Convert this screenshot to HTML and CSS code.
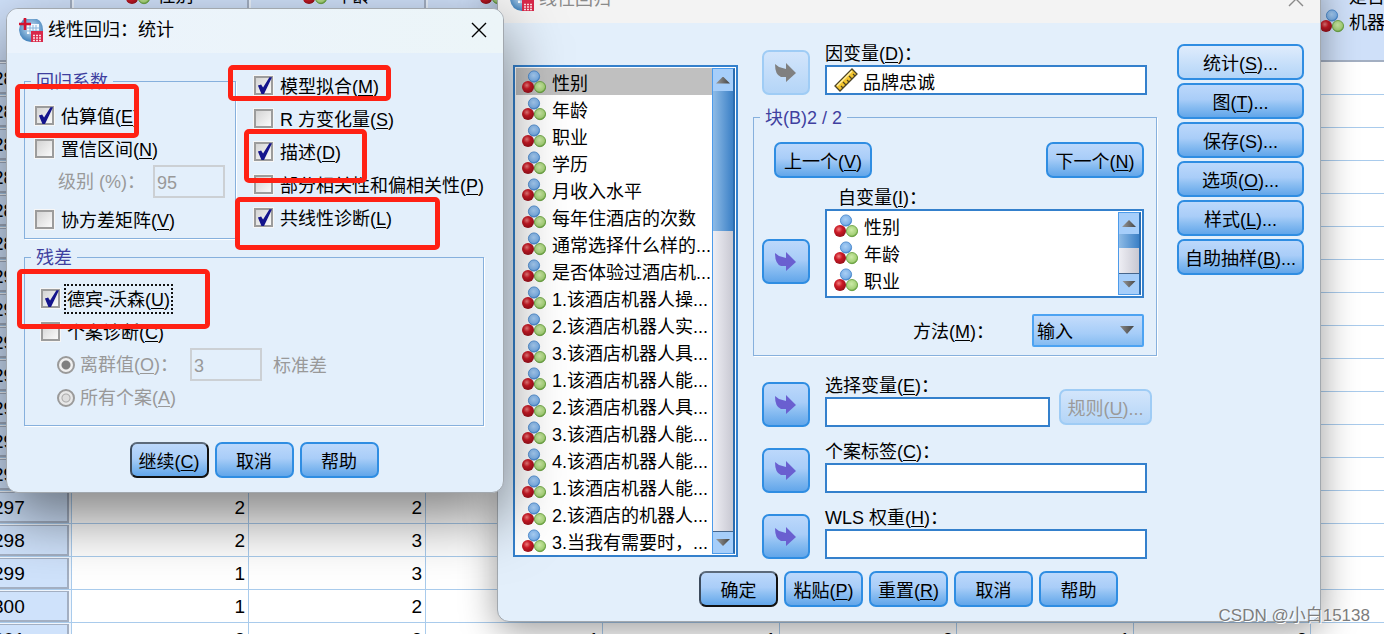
FILE: index.html
```html
<!DOCTYPE html>
<html lang="zh-CN">
<head>
    <meta charset="UTF-8">
    <meta name="viewport" content="width=device-width, initial-scale=1.0">
    <title>线性回归：统计</title>
    <link rel="stylesheet" href="styles.css">
</head>
<body>

<svg class="defs" width="0" height="0" aria-hidden="true">
    <defs>
        <radialGradient id="gBlue" cx="0.45" cy="0.4" r="0.6">
            <stop offset="0" stop-color="#a9cff5"/>
            <stop offset="0.75" stop-color="#7fb2e8"/>
            <stop offset="1" stop-color="#3f82c9"/>
        </radialGradient>
        <radialGradient id="gRed" cx="0.4" cy="0.35" r="0.65">
            <stop offset="0" stop-color="#f08080"/>
            <stop offset="0.45" stop-color="#cc1a26"/>
            <stop offset="1" stop-color="#96101a"/>
        </radialGradient>
        <radialGradient id="gGreen" cx="0.45" cy="0.4" r="0.6">
            <stop offset="0" stop-color="#cdeaa8"/>
            <stop offset="0.75" stop-color="#a5d178"/>
            <stop offset="1" stop-color="#5f9a35"/>
        </radialGradient>
        <radialGradient id="gGlobe" cx="0.5" cy="0.4" r="0.6">
            <stop offset="0" stop-color="#cfe4f6"/>
            <stop offset="1" stop-color="#3f80ba"/>
        </radialGradient>
        <symbol id="nominal" viewBox="0 0 24 23">
            <circle cx="12" cy="6" r="5.6" fill="url(#gBlue)" stroke="#3f82c9" stroke-width="0.8"/>
            <circle cx="18" cy="16.6" r="5.6" fill="url(#gGreen)" stroke="#5f9a35" stroke-width="0.8"/>
            <circle cx="6" cy="16.6" r="6" fill="url(#gRed)"/>
        </symbol>
        <symbol id="ruler" viewBox="0 0 24 24">
            <path d="M1 18 L18 1 L23 6 L6 23 Z" fill="#f3c52e" stroke="#4c4326" stroke-width="1.3"/>
            <path d="M3 18 L18 3" stroke="#fff0a0" stroke-width="1.4"/>
            <path d="M9 20 L7 18 M12 17 L9 14 M15 14 L13 12 M18 11 L15 8 M21 8 L19 6" stroke="#4c4326" stroke-width="1.2"/>
        </symbol>
        <symbol id="arrow" viewBox="0 0 22 20">
            <path d="M0 1 L4 4 L11 6 V0 L21 10 L11 19 V14 H6 Q0 12 0 1 Z" fill="currentColor"/>
        </symbol>
        <symbol id="app" viewBox="0 0 24 24">
            <path d="M5 1 H18 Q24 4 24 12 Q24 24 12 24 Q1 23 0 12 Q1 4 5 1 Z" fill="url(#gGlobe)"/>
            <path d="M8 6 H20 V16 H8 Z" fill="#f4f9fd"/>
            <path d="M8 10 H20 M8 13 H20 M11 7 V16 M14 7 V16 M17 7 V16" stroke="#87b4dc" stroke-width="1"/>
            <path d="M6 0 V12 M0 6 H12" stroke="#d3112f" stroke-width="2.6"/>
            <path d="M12 13 H24 V24 H12 Z" fill="#d8284a"/>
            <path d="M14 17.5 H22.5 M14 20 H22.5 M14 22.5 H22.5" stroke="#fbdde2" stroke-width="1.5" stroke-dasharray="2 1"/>
        </symbol>
        <symbol id="close" viewBox="0 0 16 16">
            <path d="M1 1 L15 15 M15 1 L1 15" stroke="currentColor" stroke-width="1.4" fill="none"/>
        </symbol>
    </defs>
</svg>

<div class="desktop">
    <table class="sheet">
        <thead>
            <tr>
                <th></th>
                <th><svg class="icon"><use href="#nominal"/></svg><span>性别</span></th>
                <th><svg class="icon"><use href="#nominal"/></svg><span>年龄</span></th>
                <th class="icon-only"><svg class="icon"><use href="#nominal"/></svg></th>
                <th></th>
                <th></th>
                <th></th>
                <th></th>
                <th class="long"><svg class="icon"><use href="#nominal"/></svg><span>是否体验过酒店<br>机器人服务</span></th>
            </tr>
        </thead>
        <tbody id="sheet-body"></tbody>
    </table>

    <!-- 主对话框 -->
    <section class="window main-window">
        <header class="titlebar">
            <svg class="app-icon"><use href="#app"/></svg>
            <h2>线性回归</h2>
            <button class="close" aria-label="关闭"><svg><use href="#close"/></svg></button>
        </header>
        <div class="main-body">
            <div class="columns">
                <div class="listbox source">
                    <ul id="source-list"></ul>
                    <div class="scrollbar"><i class="up"></i><i class="thumb"></i><i class="down"></i></div>
                </div>

                <div class="center">
                    <div class="move-row">
                        <button class="move" disabled aria-label="移动"><svg><use href="#arrow"/></svg></button>
                        <div class="field">
                            <label for="dep">因变量(<u>D</u>)：</label>
                            <div class="box">
                                <svg class="icon"><use href="#ruler"/></svg>
                                <input id="dep" type="text" value="品牌忠诚" readonly>
                            </div>
                        </div>
                    </div>

                    <fieldset class="block">
                        <legend>块(B)2 / 2</legend>
                        <div class="block-body">
                            <div class="pager">
                                <button class="btn">上一个(<u>V</u>)</button>
                                <button class="btn">下一个(<u>N</u>)</button>
                            </div>
                            <div class="move-row">
                                <button class="move" aria-label="移动"><svg><use href="#arrow"/></svg></button>
                                <div class="field">
                                    <span class="caption">自变量(<u>I</u>)：</span>
                                    <div class="listbox target">
                                        <ul id="target-list"></ul>
                                        <div class="scrollbar"><i class="up"></i><i class="thumb"></i><i class="down"></i></div>
                                    </div>
                                </div>
                            </div>
                            <div class="method">
                                <label for="method">方法(<u>M</u>)：</label>
                                <div class="select">
                                    <select id="method"><option>输入</option></select>
                                </div>
                            </div>
                        </div>
                    </fieldset>

                    <div class="move-row with-rule">
                        <button class="move" aria-label="移动"><svg><use href="#arrow"/></svg></button>
                        <div class="field">
                            <label for="sel">选择变量(<u>E</u>)：</label>
                            <input id="sel" class="box" type="text">
                        </div>
                        <button class="btn rule" disabled>规则(<u>U</u>)...</button>
                    </div>
                    <div class="move-row">
                        <button class="move" aria-label="移动"><svg><use href="#arrow"/></svg></button>
                        <div class="field">
                            <label for="case">个案标签(<u>C</u>)：</label>
                            <input id="case" class="box" type="text">
                        </div>
                    </div>
                    <div class="move-row">
                        <button class="move" aria-label="移动"><svg><use href="#arrow"/></svg></button>
                        <div class="field">
                            <label for="wls">WLS 权重(<u>H</u>)：</label>
                            <input id="wls" class="box" type="text">
                        </div>
                    </div>
                </div>

                <div class="side">
                    <button class="btn light">统计(<u>S</u>)...</button>
                    <button class="btn">图(<u>T</u>)...</button>
                    <button class="btn">保存(S)...</button>
                    <button class="btn">选项(<u>O</u>)...</button>
                    <button class="btn">样式(<u>L</u>)...</button>
                    <button class="btn">自助抽样(<u>B</u>)...</button>
                </div>
            </div>
            <div class="buttons">
                <button class="btn default">确定</button>
                <button class="btn">粘贴(<u>P</u>)</button>
                <button class="btn">重置(<u>R</u>)</button>
                <button class="btn">取消</button>
                <button class="btn">帮助</button>
            </div>
        </div>
    </section>

    <!-- 统计子对话框 -->
    <section class="window stats-window">
        <header class="titlebar">
            <svg class="app-icon"><use href="#app"/></svg>
            <h2>线性回归：统计</h2>
            <button class="close" aria-label="关闭"><svg><use href="#close"/></svg></button>
        </header>
        <div class="stats-body">
            <div class="top">
                <fieldset class="coef">
                    <legend>回归系数</legend>
                    <div class="group">
                        <label class="row"><input type="checkbox" checked><span>估算值(<u>E</u>)</span></label>
                        <label class="row"><input type="checkbox"><span>置信区间(<u>N</u>)</span></label>
                        <div class="row level disabled">
                            <label for="level">级别 (%)：</label>
                            <input id="level" class="num" type="text" value="95" disabled>
                        </div>
                        <label class="row last"><input type="checkbox"><span>协方差矩阵(<u>V</u>)</span></label>
                    </div>
                </fieldset>
                <div class="options">
                    <label class="row"><input type="checkbox" checked><span>模型拟合(<u>M</u>)</span></label>
                    <label class="row"><input type="checkbox"><span>R 方变化量(<u>S</u>)</span></label>
                    <label class="row"><input type="checkbox" checked><span>描述(<u>D</u>)</span></label>
                    <label class="row"><input type="checkbox"><span>部分相关性和偏相关性(<u>P</u>)</span></label>
                    <label class="row"><input type="checkbox" checked><span>共线性诊断(<u>L</u>)</span></label>
                </div>
            </div>
            <fieldset class="resid">
                <legend>残差</legend>
                <div class="group">
                    <label class="row"><input type="checkbox" checked><span class="focused">德宾-沃森(<u>U</u>)</span></label>
                    <label class="row"><input type="checkbox"><span>个案诊断(<u>C</u>)</span></label>
                    <div class="row sub disabled">
                        <input id="outlier" type="radio" name="case-type" checked disabled>
                        <label for="outlier">离群值(<u>O</u>)：</label>
                        <input class="num" type="text" value="3" aria-label="标准差" disabled>
                        <span>标准差</span>
                    </div>
                    <div class="row sub disabled">
                        <input id="all" type="radio" name="case-type" disabled>
                        <label for="all">所有个案(<u>A</u>)</label>
                    </div>
                </div>
            </fieldset>
            <div class="buttons">
                <button class="btn default">继续(<u>C</u>)</button>
                <button class="btn">取消</button>
                <button class="btn">帮助</button>
            </div>
        </div>
        <div class="mark mark-estimate"></div>
        <div class="mark mark-fit"></div>
        <div class="mark mark-desc"></div>
        <div class="mark mark-collinear"></div>
        <div class="mark mark-durbin"></div>
    </section>

    <div class="watermark">CSDN @小白15138</div>
</div>

<script>
    const variables = [
        '性别', '年龄', '职业', '学历', '月收入水平', '每年住酒店的次数',
        '通常选择什么样的...', '是否体验过酒店机...',
        '1.该酒店机器人操...', '2.该酒店机器人实...', '3.该酒店机器人具...',
        '1.该酒店机器人能...', '2.该酒店机器人具...', '3.该酒店机器人能...',
        '4.该酒店机器人能...', '1.该酒店机器人能...', '2.该酒店的机器人...',
        '3.当我有需要时，...'
    ];

    const values = {
        297: [2, 2],
        298: [2, 3],
        299: [1, 3],
        300: [1, 2],
        301: [2, 2, 1, 1, 2, 1, 2]
    };

    function fillList(id, items, selected) {
        document.getElementById(id).innerHTML = items.map((name, i) =>
            `<li class="${i === selected ? 'selected' : ''}"><svg class="icon"><use href="#nominal"/></svg><span>${name}</span></li>`
        ).join('');
    }

    function fillSheet() {
        let html = '';
        for (let n = 284; n <= 301; n++) {
            html += `<tr><th><span>${n}</span></th>`;
            for (let c = 0; c < 8; c++) {
                const v = values[n] && values[n][c];
                html += `<td>${v || ''}</td>`;
            }
            html += '</tr>';
        }
        document.getElementById('sheet-body').innerHTML = html;
    }

    fillList('source-list', variables, 0);
    fillList('target-list', variables.slice(0, 3), -1);
    fillSheet();
</script>

</body>
</html>
```
FILE: styles.css
```css
* {
    box-sizing: border-box;
}

body {
    margin: 0;
    font-family: "Liberation Sans", "Noto Sans CJK SC", sans-serif;
    font-size: 18px;
    line-height: 22px;
    color: #000;
    background-color: #fff;
}

button, input, select {
    font: inherit;
    color: inherit;
    margin: 0;
}

u {
    text-underline-offset: 2px;
}

.defs {
    position: absolute;
}

.icon {
    width: 24px;
    height: 24px;
    flex: none;
}

.desktop {
    position: relative;
    height: 100vh;
    overflow: hidden;
}

/* 数据表 */
.sheet {
    width: 1500px;
    margin: -22px 0 0 -12px;
    table-layout: fixed;
    border-collapse: separate;
    border-spacing: 0;
}

.sheet thead th {
    height: 84px;
    padding: 3px 0 0;
    vertical-align: top;
    text-align: center;
    white-space: nowrap;
    font-weight: normal;
    background-color: #cfe0f9;
    border-right: 2px solid #a3afc2;
    border-bottom: 2px solid #a3afc2;
    box-shadow: inset 2px 0 #e9f1fc;
}

.sheet th:first-child {
    width: 84px;
}

.sheet thead .icon {
    vertical-align: top;
    margin-right: 8px;
}

.sheet thead span {
    display: inline-block;
    line-height: 30px;
}

.sheet thead .icon-only {
    padding-left: 54px;
    text-align: left;
}

.sheet thead .long {
    padding: 6px 0 0 9px;
    text-align: left;
}

.sheet .long .icon {
    margin-top: 25px;
    margin-right: 5px;
}

.sheet thead .long span {
    line-height: 26px;
}

.sheet tbody th, .sheet td {
    height: 33px;
    padding: 2px 3px 0 0;
    font-size: 19px;
    font-weight: normal;
    border-right: 1px solid #a9cbec;
    border-bottom: 1px solid #a9cbec;
}

.sheet td {
    text-align: right;
}

.sheet tbody th {
    padding: 1px 2px 0 0;
    text-align: left;
    background-color: #f0f5fc;
}

.sheet tbody th span {
    display: block;
    padding: 4px 0 2px 4px;
    background-color: #cfe2fb;
    border: 1px solid #a3afc2;
    border-width: 1px 2px 2px 1px;
}

/* 窗口 */
.window {
    position: absolute;
    border: 1px solid #a2a8ae;
    border-radius: 12px;
    background-color: #e3effb;
}

.titlebar {
    display: flex;
    align-items: center;
    height: 44px;
    padding: 0 16px 3px 12px;
    border-radius: 11px 11px 0 0;
}

.titlebar h2 {
    flex: 1;
    margin: 0 0 0 5px;
    font-size: 18px;
    font-weight: normal;
}

.app-icon {
    width: 24px;
    height: 24px;
}

.close {
    display: flex;
    padding: 0;
    border: none;
    background: none;
}

.close svg {
    width: 16px;
    height: 16px;
}

.main-window {
    top: -23px;
    left: 497px;
    right: 63px;
    box-shadow: 0 8px 36px rgba(0, 0, 0, 0.4);
}

.main-window .titlebar {
    height: 45px;
    color: #8a8a8a;
    background-color: #f3f3f3;
}

.stats-window {
    top: 8px;
    left: 6px;
    width: 36%;
    box-shadow: 0 24px 60px rgba(0, 0, 0, 0.5);
}

.stats-window .titlebar {
    background: linear-gradient(90deg, #ebf3fc, #ecf5f8);
}

/* 按钮 */
.btn, .move {
    border: 2px solid #2f8de2;
    border-radius: 7px;
    background: linear-gradient(#bcd8fb, #a9cdf8 45%, #8dbff2 65%, #62a6ea);
}

.btn {
    height: 36px;
    padding: 3px 0 0;
    white-space: nowrap;
}

.btn.default {
    border-color: #5c6a7a #111 #111 #3c4a5c;
}

.btn.light {
    background: linear-gradient(#dfecfc, #b3d5f8);
}

.btn:disabled, .move:disabled {
    border-color: #9fccf5;
    background: linear-gradient(#d3e5fb, #b4d5f7);
    color: #9a9a9a;
}

.move {
    display: flex;
    align-items: center;
    justify-content: center;
    flex: none;
    width: 48px;
    height: 45px;
    padding: 0;
    color: #6a5fd0;
}

.move:disabled {
    color: #808080;
}

.move svg {
    width: 22px;
    height: 20px;
}

.buttons {
    display: flex;
    justify-content: center;
    gap: 6px;
}

.buttons .btn {
    width: 79px;
}

/* 分组框 */
fieldset {
    min-width: 0;
    margin: 0;
    padding: 0;
    border: 1px solid #86b0dd;
    box-shadow: 1px 1px #fff;
}

legend {
    margin-left: 6px;
    padding: 2px 5px 0;
    line-height: 20px;
    color: #3f3f9f;
}

/* 主对话框 */
.main-body {
    padding: 19px 16px 14px 15px;
}

.columns {
    display: flex;
    align-items: flex-start;
    margin-bottom: 12px;
}

.listbox {
    display: flex;
    padding: 1px;
    border: 2px solid #3480cc;
    background-color: #fff;
}

.listbox ul {
    flex: 1;
    min-width: 0;
    margin: 0;
    padding: 0;
    list-style: none;
}

.listbox li {
    display: flex;
    align-items: center;
    height: 27px;
    gap: 6px;
    padding-left: 6px;
    white-space: nowrap;
}

.listbox li span {
    padding-top: 5px;
}

.listbox li.selected {
    background-color: #c0c0c0;
}

.source {
    width: 225px;
    margin-top: 23px;
}

.scrollbar {
    display: flex;
    flex-direction: column;
    width: 23px;
    border: 1px solid #4d9bea;
    border-right: 2px solid #2a6cb0;
    background: linear-gradient(90deg, #eeeef4, #c8c8d2);
}

.scrollbar .up, .scrollbar .down {
    display: flex;
    align-items: center;
    justify-content: center;
    height: 22px;
    background-color: #a6cefa;
}

.scrollbar .up::after, .scrollbar .down::after {
    content: "";
    width: 14px;
    height: 7px;
    background: linear-gradient(90deg, #999, #444);
    clip-path: polygon(50% 0, 100% 100%, 0 100%);
}

.scrollbar .down::after {
    clip-path: polygon(0 0, 100% 0, 50% 100%);
}

.scrollbar .thumb {
    height: 140px;
    background: linear-gradient(90deg, #8ebbe6, #3b80c6);
}

.scrollbar .down {
    margin-top: auto;
    border-top: 1px solid #46668c;
}

.center {
    flex: 1;
    min-width: 0;
    margin: 0 20px 0 15px;
}

.move-row {
    display: flex;
    align-items: flex-end;
    gap: 15px;
    padding: 0 10px 0 9px;
}

.move-row + .move-row {
    margin-top: 13px;
}

.field {
    flex: 1;
    min-width: 0;
}

.field label, .field .caption {
    display: block;
    height: 23px;
    padding-top: 1px;
}

.box {
    display: flex;
    align-items: center;
    width: 100%;
    height: 30px;
    padding: 0 7px;
    border: 2px solid #3480cc;
    background-color: #fff;
}

.box input {
    flex: 1;
    min-width: 0;
    padding: 5px 0 0 5px;
    border: none;
    background: none;
}

.block {
    margin: 11px 0 18px;
}

.block-body {
    padding: 14px 12px 8px 8px;
}

.pager {
    display: flex;
    justify-content: space-between;
    margin: 0 0 8px 12px;
}

.pager .btn {
    width: 98px;
}

.block .move-row {
    padding: 0;
}

.block .move {
    margin-bottom: 14px;
}

.block .caption {
    padding-left: 13px;
}

.target {
    height: 89px;
}

.target .scrollbar .up, .target .scrollbar .down {
    height: 21px;
}

.target .scrollbar .thumb {
    height: 14px;
}

.method {
    display: flex;
    align-items: center;
    justify-content: flex-end;
    gap: 38px;
    margin-top: 16px;
}

.method label {
    padding-top: 2px;
}

.select {
    position: relative;
    width: 112px;
}

.select select {
    display: block;
    appearance: none;
    width: 100%;
    height: 33px;
    padding: 3px 3px 0;
    border: 2px solid #4da3f2;
    border-radius: 2px;
    background: linear-gradient(#c4dcfb, #a6cdf8 60%, #86bcf1);
}

.select::after {
    content: "";
    position: absolute;
    top: 12px;
    right: 10px;
    width: 14px;
    height: 8px;
    background: linear-gradient(90deg, #888, #444);
    clip-path: polygon(0 0, 100% 0, 50% 100%);
    pointer-events: none;
}

.with-rule {
    padding-right: 5px;
}

.rule {
    width: 93px;
    margin: 0 0 2px -6px;
}

.side {
    display: flex;
    flex-direction: column;
    gap: 3px;
    width: 127px;
    margin-top: 2px;
}

/* 统计对话框 */
.stats-body {
    padding: 17px 19px 14px 17px;
}

.top {
    display: flex;
    gap: 18px;
    margin-bottom: 7px;
}

.coef {
    width: 212px;
}

.coef .group {
    padding: 8px 10px 1px;
}

.resid {
    margin-bottom: 16px;
}

.resid .group {
    padding: 15px 16px 10px;
}

.row {
    display: flex;
    align-items: center;
    height: 33px;
    padding-bottom: 2px;
    white-space: nowrap;
}

.row > input + span {
    padding-top: 2px;
    margin-left: 7px;
}

.row.last {
    margin-top: 5px;
}

.row.disabled {
    color: #999;
}

.level {
    justify-content: space-between;
    padding-left: 23px;
}

.sub {
    padding-left: 16px;
}

.sub label {
    width: 110px;
    margin-left: 5px;
}

.sub .num + span {
    margin-left: 11px;
}

.num {
    width: 72px;
    height: 33px;
    padding: 3px 2px 0;
    border: 2px solid #ccd0d4;
    background: none;
}

input[type="checkbox"] {
    appearance: none;
    display: flex;
    flex: none;
    width: 19px;
    height: 19px;
    border: 2px solid #9c9c9c;
    background: linear-gradient(135deg, #d4d4d4, #fafafa);
    box-shadow: 0 0 0 1px #f6f6f6;
}

input[type="checkbox"]:checked::after {
    content: "";
    flex: none;
    width: 16px;
    height: 17px;
    margin-top: -1px;
    background-color: #14148c;
    clip-path: polygon(12% 50%, 32% 44%, 44% 62%, 84% 2%, 100% 2%, 50% 100%, 34% 100%);
}

input[type="radio"] {
    appearance: none;
    flex: none;
    width: 18px;
    height: 18px;
    border: 2px solid #9a9a9a;
    border-radius: 50%;
    background: radial-gradient(#ddd 0 3px, #aaa 4px, #e8e8e8 5px);
}

input[type="radio"]:checked {
    background: radial-gradient(#808080 0 4px, #f0f0f0 5px);
}

.focused {
    outline: 2px dotted #111;
    outline-offset: 1px;
}

/* 红色标注框 */
.mark {
    position: absolute;
    border: 5px solid #ff2114;
    border-radius: 5px;
    pointer-events: none;
}

.mark-estimate {
    top: 75px;
    left: 8px;
    width: 124px;
    height: 54px;
}

.mark-fit {
    top: 56px;
    left: 221px;
    width: 163px;
    height: 36px;
}

.mark-desc {
    top: 120px;
    left: 237px;
    width: 123px;
    height: 54px;
}

.mark-collinear {
    top: 188px;
    left: 228px;
    width: 205px;
    height: 53px;
}

.mark-durbin {
    top: 260px;
    left: 10px;
    width: 193px;
    height: 60px;
}

.watermark {
    position: absolute;
    right: 14px;
    bottom: 7px;
    font-size: 17px;
    color: #7d7d7d;
    text-shadow: 1px 1px #fff;
}
```
